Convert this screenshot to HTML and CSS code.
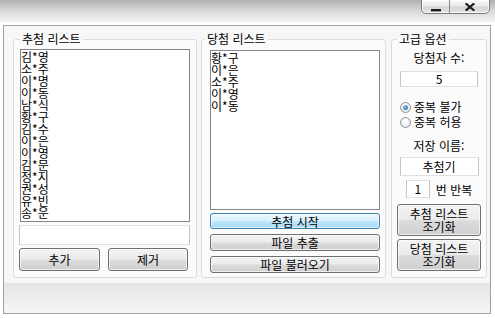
FILE: index.html
```html
<!DOCTYPE html>
<html lang="ko">
<head>
<meta charset="utf-8">
<title>추첨기</title>
<link rel="stylesheet" href="styles.css">
</head>
<body>
<div class="titlebar">
  <div class="winctl">
    <div class="wbtn wbtn-min"><svg width="10" height="3" viewBox="0 0 10 3"><rect x="0" y="0" width="10" height="2.4" fill="#1e1e1e"/></svg></div>
    <div class="wbtn wbtn-close"><svg width="10" height="8" viewBox="0 0 10 8"><path d="M1.5 1 L8.5 7 M8.5 1 L1.5 7" stroke="#1e1e1e" stroke-width="2.2" stroke-linecap="square"/></svg></div>
  </div>
</div>
<div class="window">
  <div class="groups">
    <fieldset class="group g1">
      <legend>추첨 리스트</legend>
      <div class="listbox lb1">
        <div>김*영</div><div>소*주</div><div>이*명</div><div>이*동</div><div>남*식</div><div>황*구</div><div>김*수</div><div>이*은</div><div>이*영</div><div>김*문</div><div>정*지</div><div>권*성</div><div>유*빈</div><div>송*운</div>
      </div>
      <div class="textbox tb1"></div>
      <div class="btnrow">
        <button class="btn b-add">추가</button>
        <button class="btn b-del">제거</button>
      </div>
    </fieldset>
    <fieldset class="group g2">
      <legend>당첨 리스트</legend>
      <div class="listbox lb2">
        <div>황*구</div><div>이*은</div><div>소*주</div><div>이*영</div><div>이*동</div>
      </div>
      <button class="btn primary b-start">추첨 시작</button>
      <button class="btn b-wide">파일 추출</button>
      <button class="btn b-wide">파일 불러오기</button>
    </fieldset>
    <fieldset class="group g3">
      <legend>고급 옵션</legend>
      <div class="label l-count">당첨자 수:</div>
      <div class="textbox tb-count">5</div>
      <div class="radio r1"><span class="dot on"></span>중복 불가</div>
      <div class="radio r2"><span class="dot"></span>중복 허용</div>
      <div class="label l-name">저장 이름:</div>
      <div class="textbox tb-name">추첨기</div>
      <div class="repeat"><span class="textbox tb-rep">1</span><span>번 반복</span></div>
      <button class="btn b-reset r-a">추첨 리스트<br>조기화</button>
      <button class="btn b-reset r-b">당첨 리스트<br>조기화</button>
    </fieldset>
  </div>
  <div class="statusbar"></div>
</div>
</body>
</html>
```
FILE: styles.css
```css
* { box-sizing: border-box; }
html, body { margin: 0; padding: 0; }
body {
  width: 495px;
  height: 318px;
  overflow: hidden;
  background: #ffffff;
  font-family: "Noto Sans CJK KR", "Noto Sans", sans-serif;
  font-size: 12px;
  color: #000;
}

.titlebar {
  height: 25px;
  display: flex;
  justify-content: flex-end;
  padding-right: 5px;
  background: linear-gradient(#b0b0b0 0px, #d6d6d6 10px, #f2f2f2 21px, #ffffff 23px);
}
.winctl {
  display: flex;
  width: 69px;
  height: 15px;
  margin-top: -1px;
  border: 1px solid #7c7c7c;
  border-radius: 0 0 5px 5px;
  overflow: hidden;
  background: linear-gradient(#fafafa, #e9e9e9 45%, #d6d6d6 55%, #e4e4e4);
  box-shadow: inset 0 0 0 1px rgba(255,255,255,0.7);
}
.wbtn { display: flex; justify-content: center; }
.wbtn-min { width: 28px; border-right: 1px solid #8a8a8a; align-items: flex-end; padding-bottom: 1px; }
.wbtn-close { width: 38px; align-items: center; padding-left: 2px; }

.window {
  margin-left: 3px;
  width: 488px;
  height: 289px;
  border: 1px solid #a3a3a3;
  background: #f7f7f7;
  display: flex;
  flex-direction: column;
}
.groups {
  display: flex;
  padding: 6px 0 0 9px;
  height: 252px;
}
.group {
  margin: 0;
  height: 246px;
  border: 1px solid #d3dde3;
  border-radius: 3px;
  background: #fbfbfb;
  display: flex;
  flex-direction: column;
  min-width: 0;
}
.group legend {
  line-height: 14px;
  padding: 0 2px;
}
.g1 { width: 184px; padding: 3px 6px 6px 5px; }
.g1 legend { margin-left: 1px; }
.g2 { width: 185px; margin-left: 4px; padding: 4px 5px 4px 8px; }
.g2 legend { margin-left: -5px; }
.g3 { width: 96px; margin-left: 5px; padding: 5px 0 0 0; align-items: center; }
.g3 legend { margin-left: 5px; }

.listbox {
  background: #fff;
  border: 1px solid #828790;
  line-height: 12px;
  padding: 1px 0 0 0;
  overflow: hidden;
}
.lb1 { margin-left: 1px; width: 170px; height: 173px; }
.lb2 { width: 170px; height: 160px; }

.textbox {
  background: #fff;
  border: 1px solid #e0e0e0;
  border-left-color: #c4c4c4;
  border-right-color: #c4c4c4;
  display: flex;
  align-items: center;
  justify-content: center;
  line-height: 14px;
}
.tb1 { width: 171px; height: 20px; margin-top: 3px; }

.btn {
  font: inherit;
  color: #000;
  margin: 0;
  padding: 0;
  border: 1px solid #707070;
  border-radius: 3px;
  background: linear-gradient(#f3f3f3 0%, #ebebeb 48%, #dcdcdc 52%, #cfcfcf 100%);
  box-shadow: inset 0 0 0 1px rgba(255,255,255,0.65);
  display: flex;
  align-items: center;
  justify-content: center;
  line-height: 13px;
}
.btn.primary {
  border-color: #3c7fb1;
  background: linear-gradient(#eaf6fd 0%, #d9f0fc 48%, #bee6fd 52%, #a7d9f5 100%);
}
.btnrow { display: flex; margin-top: 3px; }
.b-add { width: 81px; height: 23px; }
.b-del { width: 80px; height: 23px; margin-left: 8px; }
.b-start { width: 170px; height: 16px; margin-top: 3px; }
.b-wide { width: 170px; height: 17px; margin-top: 5px; }

.label { line-height: 14px; }
.tb-count { width: 78px; height: 16px; margin-top: 6px; }
.radio {
  align-self: stretch;
  padding-left: 8px;
  height: 14px;
  line-height: 14px;
  display: flex;
  align-items: center;
}
.r1 { margin-top: 13px; }
.r2 { margin-top: 1px; }
.dot {
  width: 11px;
  height: 11px;
  border-radius: 50%;
  border: 1px solid #8f9496;
  background: radial-gradient(circle at 50% 40%, #ffffff 20%, #d9dcde 100%);
  margin-right: 3px;
  display: flex;
  align-items: center;
  justify-content: center;
}
.dot.on::after {
  content: "";
  width: 5px;
  height: 5px;
  border-radius: 50%;
  background: radial-gradient(circle at 40% 35%, #8cc4f0, #1f5c98);
}
.l-name { margin-top: 10px; }
.tb-name { width: 79px; height: 19px; margin-top: 4px; }
.repeat { display: flex; align-items: center; margin-top: 4px; height: 18px; }
.tb-rep { width: 24px; height: 18px; margin-right: 6px; }
.b-reset { width: 84px; height: 32px; text-align: center; }
.r-a { margin-top: 6px; }
.r-b { margin-top: 3px; }

.statusbar {
  margin-top: 5px;
  height: 30px;
  background: linear-gradient(#e4e4e4, #f6f6f6);
}
```
